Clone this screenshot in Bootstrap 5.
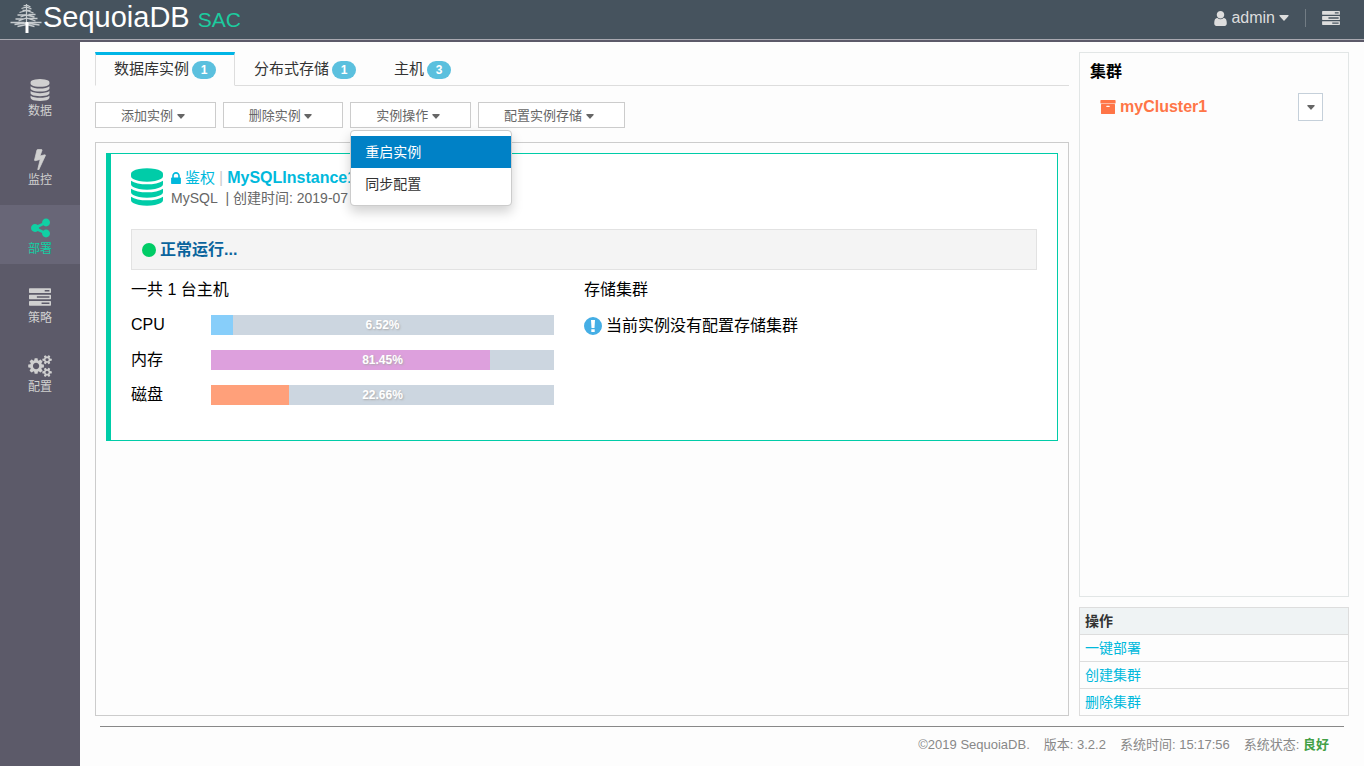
<!DOCTYPE html>
<html lang="zh-CN">
<head>
<meta charset="utf-8">
<meta name="viewport" content="width=device-width, initial-scale=1">
<title>SequoiaDB SAC</title>
<link href="https://cdn.jsdelivr.net/npm/bootstrap@5.3.0/dist/css/bootstrap.min.css" rel="stylesheet">
<style>
  body { font: 14px/20px "Liberation Sans", "Noto Sans CJK SC", sans-serif; color: #000; background: #fdfdfd; }
  a { text-decoration: none; }
  .ico { fill: currentColor; flex: none; }
  .topbar { height: 42px; background: #46535e; border-bottom: 2px solid #5c5a69; box-shadow: inset 0 -1px #a9a9b1; color: #ddd; }
  .brand-link { padding-left: 10px; }
  .brand-name { font-size: 29px; line-height: 34px; color: #fff; }
  .brand-sub { font-size: 21px; line-height: 24px; color: #1ccc9f; }
  .user-btn { font-size: 16px; line-height: 20px; color: #ddd; }
  .split { width: 1px; height: 18px; background: #727c84; }
  .sidebar { width: 80px; padding-top: 25px; gap: 10px; background: #5c5a69; }
  .side-link { height: 59px; padding-top: 12px; gap: 2px; font-size: 12px; line-height: 16px; color: #d0d0d0; }
  .side-link.active { background: #686677; color: #10d0a4; }
  .workspace { padding: 10px 15px 0; min-width: 0; }
  .columns { gap: 10px; }
  .inst-tabs { --bs-nav-tabs-border-color: #ddd; height: 34px; }
  .inst-tabs .nav-link { height: 34px; padding: 0 18px; border: 1px solid transparent; border-radius: 0; border-top: 3px solid transparent; font-size: 15px; line-height: 28px; color: #333; }
  .inst-tabs .nav-link.active { border-color: #00b5e6 #ddd #fdfdfd; background: #fdfdfd; color: #333; }
  .inst-tabs .badge { min-width: 24px; margin-left: 3px; padding: 3px 0; font-size: 12px; line-height: 12px; background: #5bc0de; }
  .tools { gap: 7px; margin: 16px 0 14px; }
  .tool-btn { height: 26px; padding: 0 30px 0 25px; border: 1px solid #ccc; border-radius: 0; background: #fff; font-size: 13px; line-height: 26px; color: #666; }
  .tool-btn:hover, .tool-btn.show { border-color: #ccc; background: #fff; color: #666; }
  .op-menu { top: 100%; left: 0; margin-top: 2px; min-width: 162px; padding: 5px 0; border: 1px solid #ccc; border-radius: 4px; box-shadow: 0 6px 12px rgba(0,0,0,.18); font-size: 14px; }
  .op-menu .dropdown-item { padding: 6px 14px; line-height: 20px; color: #333; }
  .op-menu .dropdown-item.active { background: #0081c6; color: #fff; }
  .panel-main { border: 1px solid #ccc; padding: 10px; }
  .inst-card { border: 1px solid #00cca8; border-left-width: 5px; background: #fff; padding: 14px 20px 35px; }
  .inst-icon { color: #00cca8; }
  .inst-title { gap: 4px; font-size: 16px; line-height: 20px; color: #00b9dc; }
  .inst-title a { color: #00b9dc; }
  .inst-auth { font-size: 15px; }
  .inst-bar { color: #ccc; }
  .inst-meta { color: #666; }
  .status-line { margin-top: 21px; height: 41px; padding: 0 10px; border: 1px solid #e2e2e2; background: #f4f4f4; font-size: 16px; color: #0a649d; }
  .dot { width: 14px; height: 14px; border-radius: 50%; background: #00cc66; }
  .stat { padding-top: 10px; font-size: 16px; line-height: 20px; }
  .stat-left { gap: 15px; padding-right: 30px; }
  .stat-label { width: 80px; }
  .meter { --bs-progress-bg: #ccd6e0; height: 20px; border-radius: 0; position: relative; }
  .meter .cpu { background: #87cefa; }
  .meter .mem { background: #dda0dd; }
  .meter .disk { background: #ffa07a; }
  .meter-text { position: absolute; inset: 0; text-align: center; font-size: 12px; line-height: 20px; font-weight: bold; color: #fff; text-shadow: 1px 1px 2px #aaa; }
  .alert-ico { color: #45aee5; }
  .right-col { width: 270px; gap: 10px; }
  .cluster-box { border: 1px solid #e2e6e6; padding: 9px 10px; font-size: 16px; }
  .cluster-row { padding: 11px 15px 0 10px; }
  .cluster-name { color: #ff7547; }
  .cluster-btn { width: 25px; height: 28px; border: 1px solid #c5d0da; border-radius: 0; background: #fff; color: #666; }
  .ops { border: 1px solid #ddd; font-size: 14px; line-height: 20px; }
  .ops > :not(caption) > * > * { height: 27px; padding: 3px 5px; border: 1px solid #ddd; background: #fdfdfd; }
  .ops > thead > tr > th { background: #eff3f4; color: #333; }
  .ops a { color: #00b9dc; }
  .foot { gap: 14px; margin: 10px 5px 0; padding: 9px 15px 12px; border-top: 1px solid #888; font-size: 13px; line-height: 18px; color: #888; }
  .ok { color: #43a047; }
</style>
</head>
<body>
<svg class="d-none">
  <symbol id="i-db" viewBox="128 0 1536 1792"><path d="M896 768q237 0 443-43t325-127v170q0 69-103 128t-280 93.500-385 34.500-385-34.500-280-93.500-103-128v-170q119 84 325 127t443 43zm0 768q237 0 443-43t325-127v170q0 69-103 128t-280 93.500-385 34.500-385-34.500-280-93.500-103-128v-170q119 84 325 127t443 43zm0-384q237 0 443-43t325-127v170q0 69-103 128t-280 93.500-385 34.500-385-34.500-280-93.500-103-128v-170q119 84 325 127t443 43zm0-1152q208 0 385 34.500t280 93.500 103 128v128q0 69-103 128t-280 93.500-385 34.500-385-34.500-280-93.500-103-128v-128q0-69 103-128t280-93.500 385-34.500z"/></symbol>
  <symbol id="i-bolt" viewBox="0 0 1792 1792"><path d="M1333 566q18 20 7 44l-540 1157q-13 25-42 25-4 0-14-2-17-5-25.500-19t-4.500-30l197-808-406 101q-4 1-12 1-18 0-31-11-18-15-13-39l201-825q4-14 16-23t28-9h328q19 0 32 12.500t13 29.500q0 8-5 18l-171 463 396-98q8-2 12-2 19 0 34 15z" stroke="currentColor" stroke-width="60"/></symbol>
  <symbol id="i-share" viewBox="128 128 1536 1536"><path d="M1344 1024q133 0 226.500 93.500t93.500 226.500-93.500 226.500-226.500 93.500-226.500-93.500-93.500-226.500q0-12 2-34l-360-180q-92 86-218 86-133 0-226.500-93.500t-93.500-226.500 93.500-226.500 226.500-93.500q126 0 218 86l360-180q-2-22-2-34 0-133 93.500-226.500t226.500-93.500 226.500 93.500 93.500 226.500-93.500 226.500-226.500 93.500q-126 0-218-86l-360 180q2 22 2 34t-2 34l360 180q92-86 218-86z"/></symbol>
  <symbol id="i-tasks" viewBox="0 128 1792 1408"><path d="M1024 1408h640v-128h-640v128zm-384-512h1024v-128h-1024v128zm640-512h384v-128h-384v128zm512 832v256q0 26-19 45t-45 19h-1664q-26 0-45-19t-19-45v-256q0-26 19-45t45-19h1664q26 0 45 19t19 45zm0-512v256q0 26-19 45t-45 19h-1664q-26 0-45-19t-19-45v-256q0-26 19-45t45-19h1664q26 0 45 19t19 45zm0-512v256q0 26-19 45t-45 19h-1664q-26 0-45-19t-19-45v-256q0-26 19-45t45-19h1664q26 0 45 19t19 45z"/></symbol>
  <symbol id="i-cogs" viewBox="-64 0 1920 1792"><path d="M832 896q0-106-75-181t-181-75-181 75-75 181 75 181 181 75 181-75 75-181zm768 512q0-52-38-90t-90-38-90 38-38 90q0 53 37.500 90.500t90.500 37.500 90.500-37.500 37.500-90.500zm0-1024q0-52-38-90t-90-38-90 38-38 90q0 53 37.500 90.500t90.500 37.500 90.500-37.500 37.500-90.500zm-384 421v185q0 10-7 19.500t-16 10.500l-155 24q-11 35-32 76 34 48 90 115 7 11 7 20 0 12-7 19-23 30-82.500 89.500t-78.500 59.500q-11 0-21-7l-115-90q-37 19-77 31-11 108-23 155-7 24-30 24h-186q-11 0-20-7.500t-10-17.500l-23-153q-34-10-75-31l-118 89q-7 7-20 7-11 0-21-8-144-133-144-160 0-9 7-19 10-14 41-53t47-61q-23-44-35-82l-152-24q-10-1-17-9.500t-7-19.500v-185q0-10 7-19.500t16-10.500l155-24q11-35 32-76-34-48-90-115-7-11-7-20 0-12 7-20 22-30 82-89t79-59q11 0 21 7l115 90q34-18 77-32 11-108 23-154 7-24 30-24h186q11 0 20 7.500t10 17.500l23 153q34 10 75 31l118-89q8-7 20-7 11 0 21 8 144 133 144 160 0 8-7 19-12 16-42 54t-45 60q23 48 34 82l152 23q10 2 17 10.500t7 19.500zm640 533v140q0 16-149 31-12 27-30 52 51 113 51 138 0 4-4 7-122 71-124 71-8 0-46-47t-52-68q-20 2-30 2t-30-2q-14 21-52 68t-46 47q-2 0-124-71-4-3-4-7 0-25 51-138-18-25-30-52-149-15-149-31v-140q0-16 149-31 13-29 30-52-51-113-51-138 0-4 4-7 4-2 35-20t59-34 30-16q8 0 46 46.500t52 67.500q20-2 30-2t30 2q51-71 92-112l6-2q4 0 124 70 4 3 4 7 0 25-51 138 17 23 30 52 149 15 149 31zm0-1024v140q0 16-149 31-12 27-30 52 51 113 51 138 0 4-4 7-122 71-124 71-8 0-46-47t-52-68q-20 2-30 2t-30-2q-14 21-52 68t-46 47q-2 0-124-71-4-3-4-7 0-25 51-138-18-25-30-52-149-15-149-31v-140q0-16 149-31 13-29 30-52-51-113-51-138 0-4 4-7 4-2 35-20t59-34 30-16q8 0 46 46.500t52 67.500q20-2 30-2t30 2q51-71 92-112l6-2q4 0 124 70 4 3 4 7 0 25-51 138 17 23 30 52 149 15 149 31z"/></symbol>
  <symbol id="i-user" viewBox="256 128 1280 1536"><path d="M1536 1399q0 109-62.500 187t-150.500 78h-854q-88 0-150.500-78t-62.500-187q0-85 8.500-160.500t31.500-152 58.500-131 94-89 134.500-34.500q131 128 313 128t313-128q76 0 134.500 34.500t94 89 58.500 131 31.500 152 8.500 160.500zm-256-887q0 159-112.500 271.500t-271.500 112.500-271.500-112.500-112.500-271.500 112.500-271.500 271.500-112.500 271.500 112.500 112.500 271.500z"/></symbol>
  <symbol id="i-lock" viewBox="320 128 1152 1408"><path d="M640 768h512v-192q0-106-75-181t-181-75-181 75-75 181v192zm832 96v576q0 40-28 68t-68 28h-960q-40 0-68-28t-28-68v-576q0-40 28-68t68-28h32v-192q0-184 132-316t316-132 316 132 132 316v192h32q40 0 68 28t28 68z"/></symbol>
  <symbol id="i-box" viewBox="64 128 1664 1536"><path d="M1088 832q0-26-19-45t-45-19h-256q-26 0-45 19t-19 45 19 45 45 19h256q26 0 45-19t19-45zm576-192v960q0 26-19 45t-45 19h-1408q-26 0-45-19t-19-45v-960q0-26 19-45t45-19h1408q26 0 45 19t19 45zm64-448v256q0 26-19 45t-45 19h-1536q-26 0-45-19t-19-45v-256q0-26 19-45t45-19h1536q26 0 45 19t19 45z"/></symbol>
  <symbol id="i-caret" viewBox="0 0 10 6"><path d="M1 0h8q1 0 .5 1L5.500 5.500q-.5.500-1 0L.5 1Q0 0 1 0z"/></symbol>
  <symbol id="i-alert" viewBox="0 0 18 18"><path fill-rule="evenodd" d="M9 0a9 9 0 1 0 0 18A9 9 0 0 0 9 0zM7 3h4l-.5 8h-3zM7.300 12.200h3.400v2.800H7.300z"/></symbol>
  <symbol id="i-tree" viewBox="0 0 32 30"><g fill="none" stroke="#c6cbce" stroke-width="1.300"><path d="M16 0v20M13 2l3-1 4 2M11 4.500l5-1.500 5 2M12 6.500h8M9 8.500l7-2 7 2.500M7 11h8m3-.5h7M10 13l6-2 8 2M5 15h9m4-.5h9M8 17l8-3 9 3M0 18.500h14m4 0h13M4 20.500l11-1.500 14 2M7 22.500l9-2 8 2"/></g><path fill="#fff" d="M15 18h3v11h-3z"/></symbol>
</svg>
<div class="min-vh-100 d-flex flex-column">
  <header class="topbar d-flex align-items-start">
    <a href="#" class="brand-link d-flex">
      <svg class="ico mt-1" width="33" height="30"><use href="#i-tree"/></svg>
      <span class="brand-name">SequoiaDB</span>
      <span class="brand-sub ms-2 mt-2">SAC</span>
    </a>
    <div class="d-flex align-items-center ms-auto me-4 pt-2">
      <button class="user-btn btn p-0 border-0 d-flex align-items-center" type="button">
        <svg class="ico me-1" width="13" height="15"><use href="#i-user"/></svg>admin<svg class="ico ms-1" width="10" height="6"><use href="#i-caret"/></svg>
      </button>
      <span class="split ms-3"></span>
      <a href="#" class="user-btn d-flex ms-3" aria-label="任务"><svg class="ico" width="18" height="14"><use href="#i-tasks"/></svg></a>
    </div>
  </header>
  <div class="flex-grow-1 d-flex">
    <nav class="sidebar flex-shrink-0 d-flex flex-column">
      <a href="#" class="side-link d-flex flex-column align-items-center"><svg class="ico" width="20" height="22"><use href="#i-db"/></svg>数据</a>
      <a href="#" class="side-link d-flex flex-column align-items-center"><svg class="ico" width="22" height="22"><use href="#i-bolt"/></svg>监控</a>
      <a href="#" class="side-link active d-flex flex-column align-items-center"><svg class="ico" width="19" height="22"><use href="#i-share"/></svg>部署</a>
      <a href="#" class="side-link d-flex flex-column align-items-center"><svg class="ico" width="22" height="22"><use href="#i-tasks"/></svg>策略</a>
      <a href="#" class="side-link d-flex flex-column align-items-center"><svg class="ico" width="24" height="22"><use href="#i-cogs"/></svg>配置</a>
    </nav>
    <div class="workspace flex-grow-1 d-flex flex-column">
      <div class="columns flex-grow-1 d-flex">
        <main class="flex-grow-1 d-flex flex-column">
          <ul class="inst-tabs nav nav-tabs">
            <li class="nav-item"><a class="nav-link active" href="#">数据库实例<span class="badge rounded-pill">1</span></a></li>
            <li class="nav-item"><a class="nav-link" href="#">分布式存储<span class="badge rounded-pill">1</span></a></li>
            <li class="nav-item"><a class="nav-link" href="#">主机<span class="badge rounded-pill">3</span></a></li>
          </ul>
          <div class="tools d-flex">
            <button class="tool-btn btn" type="button">添加实例 <svg class="ico" width="8" height="5"><use href="#i-caret"/></svg></button>
            <button class="tool-btn btn" type="button">删除实例 <svg class="ico" width="8" height="5"><use href="#i-caret"/></svg></button>
            <div class="dropdown">
              <button class="tool-btn btn show" type="button" aria-expanded="true">实例操作 <svg class="ico" width="8" height="5"><use href="#i-caret"/></svg></button>
              <ul class="op-menu dropdown-menu show">
                <li><a class="dropdown-item active" href="#">重启实例</a></li>
                <li><a class="dropdown-item" href="#">同步配置</a></li>
              </ul>
            </div>
            <button class="tool-btn btn" type="button">配置实例存储 <svg class="ico" width="8" height="5"><use href="#i-caret"/></svg></button>
          </div>
          <section class="panel-main flex-grow-1">
            <article class="inst-card">
              <div class="d-flex">
                <svg class="inst-icon ico me-2" width="32" height="38"><use href="#i-db"/></svg>
                <div>
                  <div class="inst-title d-flex align-items-center"><svg class="ico" width="10" height="12"><use href="#i-lock"/></svg><a href="#" class="inst-auth">鉴权</a><span class="inst-bar">|</span><a href="#" class="fw-bold">MySQLInstance1</a></div>
                  <div class="inst-meta">MySQL&nbsp; | 创建时间: 2019-07</div>
                </div>
              </div>
              <div class="status-line d-flex align-items-center fw-bold"><span class="dot me-1"></span>正常运行...</div>
              <div class="stat row g-0">
                <div class="stat-left col-6 d-flex flex-column">
                  <div>一共 1 台主机</div>
                  <div class="d-flex"><span class="stat-label">CPU</span><div class="meter progress flex-grow-1"><div class="progress-bar cpu" style="width:6.52%"></div><span class="meter-text">6.52%</span></div></div>
                  <div class="d-flex"><span class="stat-label">内存</span><div class="meter progress flex-grow-1"><div class="progress-bar mem" style="width:81.45%"></div><span class="meter-text">81.45%</span></div></div>
                  <div class="d-flex"><span class="stat-label">磁盘</span><div class="meter progress flex-grow-1"><div class="progress-bar disk" style="width:22.66%"></div><span class="meter-text">22.66%</span></div></div>
                </div>
                <div class="col-6">
                  <div>存储集群</div>
                  <div class="d-flex align-items-center mt-3"><svg class="alert-ico ico me-1" width="18" height="18"><use href="#i-alert"/></svg>当前实例没有配置存储集群</div>
                </div>
              </div>
            </article>
          </section>
        </main>
        <aside class="right-col flex-shrink-0 d-flex flex-column">
          <section class="cluster-box flex-grow-1">
            <div class="fw-bold">集群</div>
            <div class="cluster-row d-flex align-items-center justify-content-between">
              <a href="#" class="cluster-name fw-bold d-flex align-items-center"><svg class="ico me-1" width="16" height="14"><use href="#i-box"/></svg>myCluster1</a>
              <button class="cluster-btn btn p-0 d-flex align-items-center justify-content-center" type="button" aria-label="集群操作"><svg class="ico" width="8" height="5"><use href="#i-caret"/></svg></button>
            </div>
          </section>
          <table class="ops table mb-0">
            <thead><tr><th>操作</th></tr></thead>
            <tbody>
              <tr><td><a href="#">一键部署</a></td></tr>
              <tr><td><a href="#">创建集群</a></td></tr>
              <tr><td><a href="#">删除集群</a></td></tr>
            </tbody>
          </table>
        </aside>
      </div>
      <footer class="foot d-flex justify-content-end">
        <span>©2019 SequoiaDB.</span><span>版本: 3.2.2</span><span>系统时间: 15:17:56</span><span>系统状态: <b class="ok">良好</b></span>
      </footer>
    </div>
  </div>
</div>
<script src="https://cdn.jsdelivr.net/npm/bootstrap@5.3.0/dist/js/bootstrap.bundle.min.js"></script>
</body>
</html>
